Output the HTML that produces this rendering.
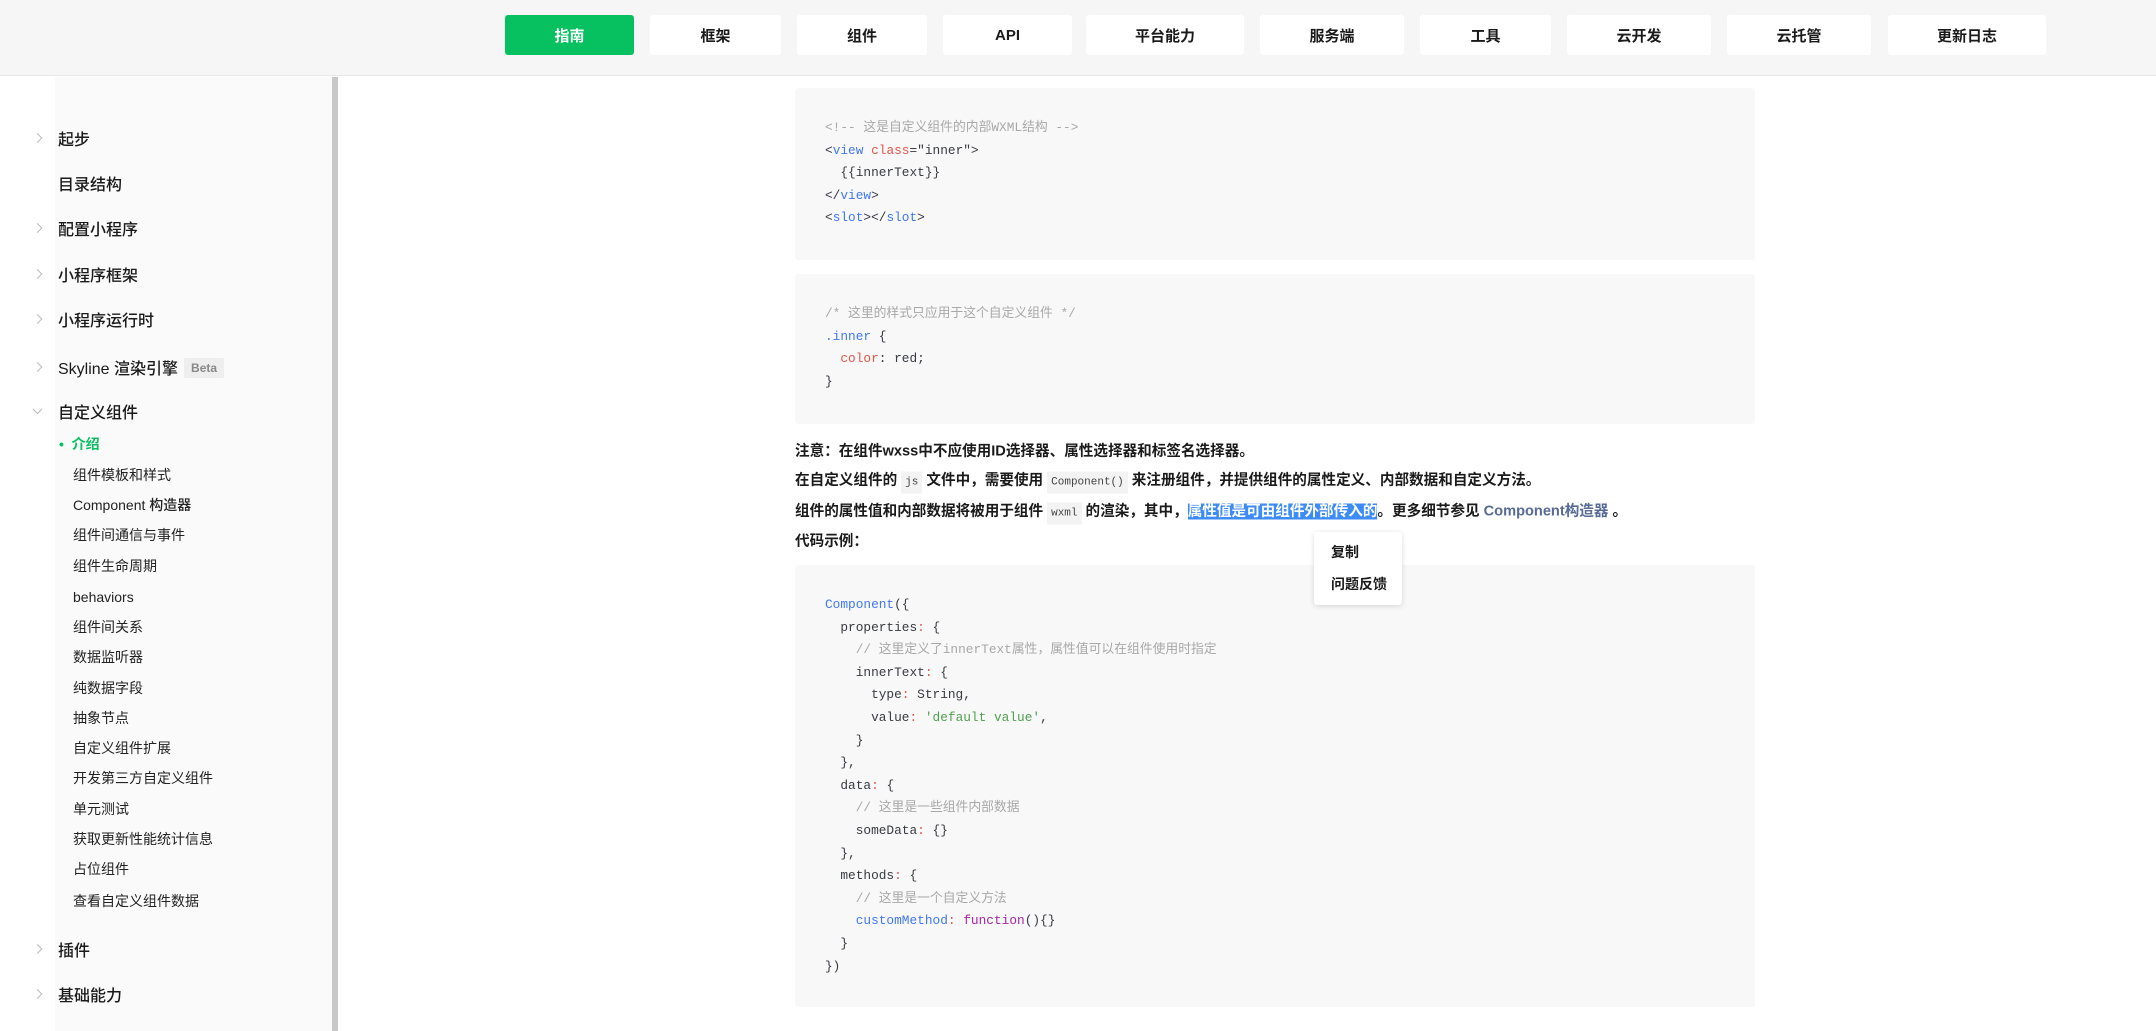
<!DOCTYPE html>
<html><head><meta charset="utf-8"><style>
*{margin:0;padding:0;box-sizing:border-box}
body{width:2156px;height:1031px;overflow:hidden;background:#fff;font-family:"Liberation Sans","Noto Sans CJK SC",sans-serif;color:#1a1a1a;position:relative}
.hdr{position:absolute;left:0;top:0;width:2156px;height:76px;background:#f6f6f6;border-bottom:1px solid #e8e8e8;z-index:5}
.nb{position:absolute;top:15px;height:40px;background:#fff;border-radius:3px;font-size:15px;font-weight:bold;display:flex;align-items:center;justify-content:center;color:#1a1a1a}
.nb.on{background:#07c160;color:#fff}
.side{position:absolute;left:55px;top:77px;width:277px;height:954px;background:#fafafa}
.sb{position:absolute;left:332px;top:77px;width:6px;height:954px;background:#c8c8c8}
.it{position:absolute;font-size:16px;font-weight:500;white-space:nowrap;transform:translateY(-50%)}
.sub{position:absolute;left:73px;font-size:14px;white-space:nowrap;transform:translateY(-50%);color:#222}
.chev{position:absolute;left:34px;width:7px;height:7px;border-right:1.5px solid #bbb;border-top:1.5px solid #bbb;transform:translateY(-50%) rotate(45deg)}
.chev.d{transform:translateY(-75%) rotate(135deg)}
.beta{display:inline-block;background:#eee;color:#888;font-size:12px;padding:3px 7px;border-radius:2px;margin-left:6px;vertical-align:2px;font-weight:bold}
.code{position:absolute;left:795px;width:960px;background:#f8f8f8;border-radius:3px}
pre{position:absolute;left:30px;font-family:"Liberation Mono","Noto Sans CJK SC",monospace;font-size:12.8px;line-height:22.6px;color:#383a42}
.c{color:#a8a8a8}.t{color:#4078f2}.a{color:#e45649}.s{color:#50a14f}.k{color:#a626a4}.p{color:#e45649}
.para{position:absolute;left:795px;font-size:14.6px;font-weight:bold;white-space:nowrap;transform:translateY(-50%)}
.ic{font-family:"Liberation Mono",monospace;font-weight:normal;font-size:11px;background:#f3f3f3;padding:5px 4px;margin:0 4px;color:#444}
.hl{background:#3d8bf7;color:#fff}
.lnk{color:#576b95}
.menu{position:absolute;left:1314px;top:532px;width:88px;height:73px;background:#fff;border-radius:3px;box-shadow:0 1px 6px rgba(0,0,0,.15);font-size:14px;font-weight:bold}
.menu div{position:absolute;left:17px}
</style></head><body>
<div class="hdr">
<div class="nb on" style="left:505px;width:129px">指南</div>
<div class="nb" style="left:650px;width:131px">框架</div>
<div class="nb" style="left:797px;width:130px">组件</div>
<div class="nb" style="left:943px;width:129px">API</div>
<div class="nb" style="left:1086px;width:158px">平台能力</div>
<div class="nb" style="left:1260px;width:144px">服务端</div>
<div class="nb" style="left:1420px;width:131px">工具</div>
<div class="nb" style="left:1567px;width:144px">云开发</div>
<div class="nb" style="left:1727px;width:144px">云托管</div>
<div class="nb" style="left:1888px;width:158px">更新日志</div>
</div>
<div class="side"></div><div class="sb"></div>
<i class="chev" style="top:138px"></i><div class="it" style="left:58px;top:138px">起步</div>
<div class="it" style="left:58px;top:183px">目录结构</div>
<i class="chev" style="top:228px"></i><div class="it" style="left:58px;top:228px">配置小程序</div>
<i class="chev" style="top:274px"></i><div class="it" style="left:58px;top:274px">小程序框架</div>
<i class="chev" style="top:319px"></i><div class="it" style="left:58px;top:319px">小程序运行时</div>
<i class="chev" style="top:367px"></i><div class="it" style="left:58px;top:367px">Skyline 渲染引擎<span class="beta">Beta</span></div>
<i class="chev d" style="top:411px"></i><div class="it" style="left:58px;top:411px">自定义组件</div>
<div class="sub" style="left:59px;top:444px;color:#07c160;font-weight:bold">•&nbsp;&nbsp;介绍</div>
<div class="sub" style="top:475px">组件模板和样式</div>
<div class="sub" style="top:505px;font-weight:500">Component 构造器</div>
<div class="sub" style="top:535px">组件间通信与事件</div>
<div class="sub" style="top:566px">组件生命周期</div>
<div class="sub" style="top:597px;font-weight:500">behaviors</div>
<div class="sub" style="top:627px">组件间关系</div>
<div class="sub" style="top:657px">数据监听器</div>
<div class="sub" style="top:688px">纯数据字段</div>
<div class="sub" style="top:718px">抽象节点</div>
<div class="sub" style="top:748px">自定义组件扩展</div>
<div class="sub" style="top:778px">开发第三方自定义组件</div>
<div class="sub" style="top:809px">单元测试</div>
<div class="sub" style="top:839px">获取更新性能统计信息</div>
<div class="sub" style="top:869px">占位组件</div>
<div class="sub" style="top:901px">查看自定义组件数据</div>
<i class="chev" style="top:949px"></i><div class="it" style="left:58px;top:949px">插件</div>
<i class="chev" style="top:994px"></i><div class="it" style="left:58px;top:994px">基础能力</div>

<div class="code" style="top:88px;height:172px"><pre style="top:29px"><span class="c">&lt;!-- 这是自定义组件的内部WXML结构 --&gt;</span>
&lt;<span class="t">view</span> <span class="a">class</span>="inner"&gt;
  {{innerText}}
&lt;/<span class="t">view</span>&gt;
&lt;<span class="t">slot</span>&gt;&lt;/<span class="t">slot</span>&gt;</pre></div>
<div class="code" style="top:274px;height:150px"><pre style="top:29px"><span class="c">/* 这里的样式只应用于这个自定义组件 */</span>
<span class="t">.inner</span> {
  <span class="a">color</span>: red;
}</pre></div>
<div class="para" style="top:450px">注意：在组件wxss中不应使用ID选择器、属性选择器和标签名选择器。</div>
<div class="para" style="top:479px">在自定义组件的<span class="ic">js</span>文件中，需要使用<span class="ic">Component()</span>来注册组件，并提供组件的属性定义、内部数据和自定义方法。</div>
<div class="para" style="top:510px">组件的属性值和内部数据将被用于组件<span class="ic">wxml</span>的渲染，其中，<span class="hl">属性值是可由组件外部传入的</span>。更多细节参见 <span class="lnk">Component构造器</span> 。</div>
<div class="para" style="top:540px">代码示例：</div>
<div class="code" style="top:565px;height:442px"><pre style="top:29px"><span class="t">Component</span>({
  properties<span class="p">:</span> {
    <span class="c">// 这里定义了innerText属性，属性值可以在组件使用时指定</span>
    innerText<span class="p">:</span> {
      type<span class="p">:</span> String,
      value<span class="p">:</span> <span class="s">'default value'</span>,
    }
  },
  data<span class="p">:</span> {
    <span class="c">// 这里是一些组件内部数据</span>
    someData<span class="p">:</span> {}
  },
  methods<span class="p">:</span> {
    <span class="c">// 这里是一个自定义方法</span>
    <span class="t">customMethod</span><span class="p">:</span> <span class="k">function</span>(){}
  }
})</pre></div>
<div class="menu"><div style="top:10px">复制</div><div style="top:42px">问题反馈</div></div>
</body></html>
